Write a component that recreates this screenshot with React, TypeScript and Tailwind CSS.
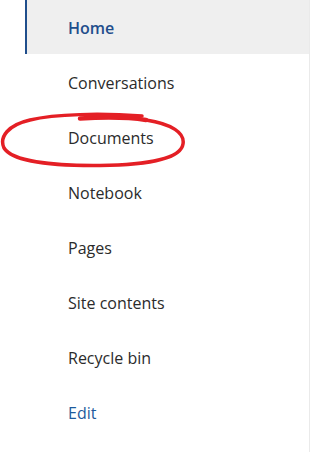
const items = [
  'Conversations',
  'Documents',
  'Notebook',
  'Pages',
  'Site contents',
  'Recycle bin',
];

export default function App() {
  return (
    <div className="relative h-[452px] w-[312px] overflow-hidden bg-white font-['Open_Sans',sans-serif]">
      <nav className="ml-[25px] flex h-full w-[285px] flex-col gap-px border-r border-[#eaeaea]">
        <a className="flex h-[54px] items-center border-l-2 border-[#1f4e8c] bg-[#efefef] pl-[41px] pt-[2px] text-[16px] font-semibold text-[#1f4e8c]">
          Home
        </a>
        {items.map((item) => (
          <a key={item} className="flex h-[54px] items-center pl-[43px] pt-[2px] text-[16px] text-[#2b2b2b]">
            {item}
          </a>
        ))}
        <a className="flex h-[54px] items-center pl-[43px] pt-[2px] text-[16px] text-[#1d5a9c]">Edit</a>
      </nav>
      <svg className="pointer-events-none absolute left-0 top-0" width="312" height="452" fill="none">
        <path d="M80 118.5 C105 117, 130 117.5, 146 120" stroke="#e41f25" strokeWidth="4.5" strokeLinecap="round" />
        <path
          d="M146 120 C172 124, 185 133, 183 144 C181 158, 150 165, 100 165.5 C50 166, 12 161, 4 148 C-1 137, 8 125, 30 120 C55 114, 100 113, 142 116"
          stroke="#e41f25"
          strokeWidth="3.5"
          strokeLinecap="round"
        />
      </svg>
    </div>
  );
}
